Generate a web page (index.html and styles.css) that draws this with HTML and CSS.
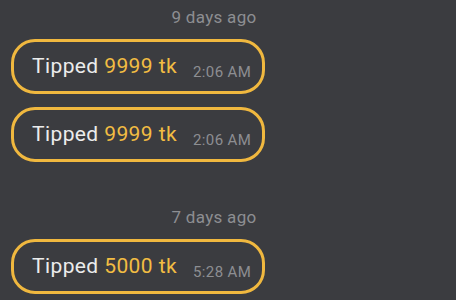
FILE: index.html
```html
<!DOCTYPE html>
<html>
<head>
<meta charset="utf-8">
<link rel="stylesheet" href="styles.css">
</head>
<body>
<div class="feed">
  <div class="day-label">9 days ago</div>
  <div class="bubble">
    <span class="msg">Tipped <span class="amount">9999 tk</span></span>
    <span class="time">2:06 AM</span>
  </div>
  <div class="bubble">
    <span class="msg">Tipped <span class="amount">9999 tk</span></span>
    <span class="time">2:06 AM</span>
  </div>
  <div class="day-label later">7 days ago</div>
  <div class="bubble">
    <span class="msg">Tipped <span class="amount">5000 tk</span></span>
    <span class="time">5:28 AM</span>
  </div>
</div>
</body>
</html>
```
FILE: styles.css
```css
html, body {
  margin: 0;
  padding: 0;
  background: #3b3c40;
  height: 100%;
  overflow: hidden;
}
body {
  font-family: Roboto, "Liberation Sans", sans-serif;
}
.feed {
  display: flex;
  flex-direction: column;
  align-items: flex-start;
  padding-top: 7px;
}
.day-label {
  align-self: stretch;
  margin-right: 28px;
  text-align: center;
  font-size: 17px;
  line-height: 20px;
  letter-spacing: 0.3px;
  color: #8d8e92;
  margin-bottom: 12px;
}
.day-label.later {
  margin-top: 32px;
}
.bubble {
  display: flex;
  align-items: flex-start;
  margin-left: 11px;
  margin-bottom: 13px;
  border: 3px solid #f0b83f;
  border-radius: 24px;
  padding: 12px 11px 13px 18px;
  gap: 16px;
}
.msg {
  font-size: 21px;
  line-height: 24px;
  letter-spacing: 0.4px;
  color: #ececec;
}
.amount {
  color: #f2bd43;
}
.time {
  align-self: flex-end;
  margin-bottom: -3px;
  font-size: 15px;
  line-height: 18px;
  letter-spacing: 0.4px;
  color: #8d8e92;
}
```
